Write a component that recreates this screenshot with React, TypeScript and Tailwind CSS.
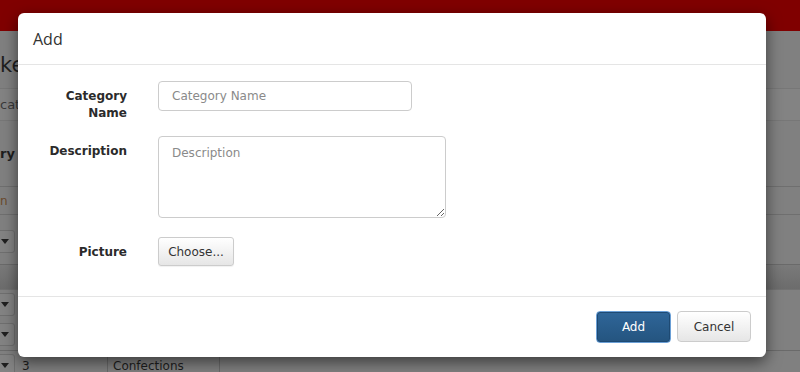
import React from "react";

const sans = { fontFamily: '"DejaVu Sans", Verdana, sans-serif' };

const Arrow = () => (
  <svg width="8" height="5" viewBox="0 0 8 5" className="fill-[#1f1f1f]">
    <path d="M0 0h8L4 5z" />
  </svg>
);

const DimSelect = () => (
  <div className="ml-[-14px] flex h-[23px] w-[29px] items-center justify-end rounded-[3px] border border-[#6f6f6f] bg-[#838383] pr-[5px]">
    <Arrow />
  </div>
);

const BackgroundPage = () => (
  <div className="flex h-[372px] w-[800px] flex-col bg-[#808080]" style={sans}>
    <div className="h-[32px] bg-[#800000]" />
    <div className="flex h-[58px] items-end pb-[12px]">
      <span className="text-[21px] leading-none text-[#1e1e1e]">ke</span>
    </div>
    <div className="flex h-[33px] items-center border-y border-[#777] bg-[#838383]">
      <span className="text-[13px] text-[#3a3a3a]">cat</span>
    </div>
    <div className="flex h-[67px] items-center">
      <span className="text-[13px] font-bold text-[#1e1e1e]">ry N</span>
    </div>
    <div className="flex h-[29px] items-center border-y border-[#6f6f6f]">
      <span className="text-[12px] text-[#6a4a2c]">n</span>
    </div>
    <div className="flex h-[51px] items-center border-b border-[#6a6a6a] pt-[4px]">
      <DimSelect />
    </div>
    <div className="h-[25px] bg-gradient-to-b from-[#7a7a7a] to-[#6c6c6c]" />
    <div className="flex h-[31px] items-center border-t border-[#727272]">
      <DimSelect />
    </div>
    <div className="flex h-[31px] items-center">
      <DimSelect />
    </div>
    <div className="flex h-[22px] items-start border-t border-[#6a6a6a] pt-[3px]">
      <DimSelect />
      <div className="flex h-[22px] w-[93px] items-start border-r border-[#6a6a6a] pl-[7px] pt-[3px] text-[12px] text-[#1e1e1e]">
        3
      </div>
      <div className="flex h-[22px] w-[112px] items-start border-r border-[#6a6a6a] pl-[5px] pt-[3px] text-[12px] text-[#1e1e1e]">
        Confections
      </div>
    </div>
  </div>
);

const Label = ({ children }: { children: React.ReactNode }) => (
  <div className="w-[109px] pt-[7px] text-right text-[12px] font-bold leading-[17px] text-[#2b2b2b]">
    {children}
  </div>
);

export default function App() {
  return (
    <div className="relative h-[372px] w-[800px] overflow-hidden">
      <BackgroundPage />
      <div
        className="absolute left-[18px] top-[13px] flex h-[344px] w-[748px] flex-col rounded-[6px] bg-white shadow-[0_5px_15px_rgba(0,0,0,0.55)]"
        style={sans}
      >
        <div className="flex h-[52px] items-center border-b border-[#e5e5e5] px-[15px]">
          <h4
            className="text-[16px] leading-none text-[#333]"
            style={{ fontFamily: '"Open Sans", "Noto Sans", sans-serif' }}
          >
            Add
          </h4>
        </div>
        <div className="flex h-[231px] flex-col pt-[16px]">
          <div className="flex">
            <Label>
              Category
              <br />
              Name
            </Label>
            <div className="ml-[31px]">
              <input
                type="text"
                placeholder="Category Name"
                className="h-[30px] w-[254px] rounded-[4px] border border-[#ccc] px-[13px] text-[12px] text-[#555] outline-none placeholder:text-[#8a8a8a]"
              />
            </div>
          </div>
          <div className="mt-[14px] flex">
            <Label>Description</Label>
            <div className="ml-[31px]">
              <textarea
                placeholder="Description"
                className="block h-[82px] w-[288px] rounded-[4px] border border-[#ccc] px-[13px] py-[7px] text-[12px] text-[#555] outline-none placeholder:text-[#8a8a8a]"
              />
            </div>
          </div>
          <div className="mt-[19px] flex">
            <Label>Picture</Label>
            <div className="ml-[31px]">
              <button className="h-[29px] w-[76px] rounded-[3px] border border-[#ccc] bg-gradient-to-b from-white to-[#e6e6e6] text-[12px] text-[#333] shadow-[0_1px_1px_rgba(0,0,0,0.06)]">
                Choose...
              </button>
            </div>
          </div>
        </div>
        <div className="flex flex-1 items-start justify-end gap-[6px] border-t border-[#e5e5e5] px-[15px] pt-[14px]">
          <button className="h-[32px] w-[75px] rounded-[4px] border border-[#6a9fd6] bg-gradient-to-b from-[#2f6699] to-[#24547f] text-[12px] text-white shadow-[inset_0_0_0_1px_#1e4a73]">
            Add
          </button>
          <button className="h-[31px] w-[74px] rounded-[4px] border border-[#ccc] bg-gradient-to-b from-white to-[#e6e6e6] text-[12px] text-[#333]">
            Cancel
          </button>
        </div>
      </div>
    </div>
  );
}
